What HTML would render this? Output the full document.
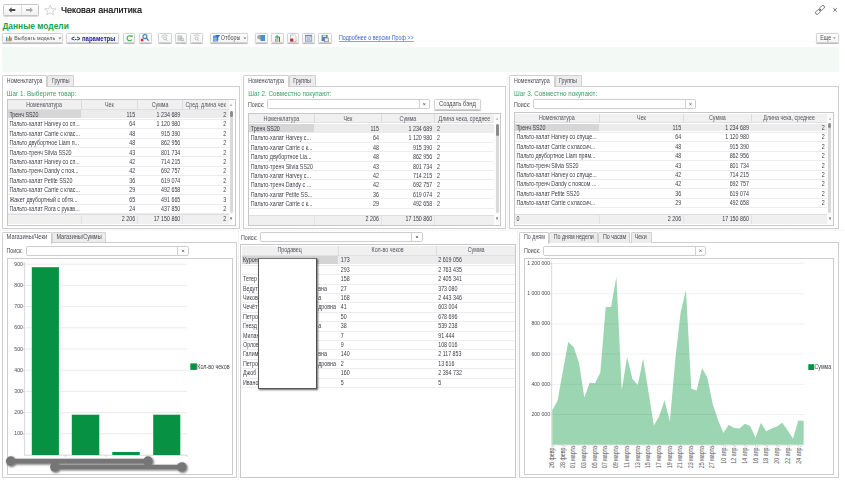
<!DOCTYPE html>
<html><head><meta charset="utf-8"><style>
html,body{margin:0;padding:0;background:#fff;width:845px;height:480px;overflow:hidden;position:relative}
body{font-family:"Liberation Sans",sans-serif}
div{position:absolute;box-sizing:border-box}
.t{white-space:nowrap}
svg{position:absolute;overflow:visible}
</style></head><body>
<div style="left:2.70px;top:4.30px;width:36.20px;height:11.30px;border:1px solid #c6c6c6;border-radius:1.5px;background:linear-gradient(#ffffff,#f1f1f1);box-shadow:0 0.6px 0.6px #b5b5b5"></div>
<div style="left:20.70px;top:4.80px;width:0.70px;height:10.30px;background:#dedede"></div>
<svg style="left:0;top:0" width="845" height="480" viewBox="0 0 845 480"><path d="M8.6 9.95 L11.6 7.2 L11.6 8.9 L15.3 8.9 L15.3 11 L11.6 11 L11.6 12.7 Z" fill="#4a4a4a"/><path d="M33 9.95 L30 7.2 L30 8.9 L26 8.9 L26 11 L30 11 L30 12.7 Z" fill="#a8a8a8"/><path d="M50.25 5.2 L51.7 8.6 L55.9 8.9 L52.7 11.3 L53.8 14.9 L50.25 12.9 L46.7 14.9 L47.8 11.3 L44.6 8.9 L48.8 8.6 Z" fill="none" stroke="#c3cad2" stroke-width="0.8"/><g fill="none" stroke="#606060" stroke-width="0.8" transform="rotate(-45 820 9.9)"><rect x="814.3" y="8.3" width="5.6" height="3.2" rx="1.6"/><rect x="820.1" y="8.3" width="5.6" height="3.2" rx="1.6"/><path d="M818.6 9.9 L821.4 9.9"/></g><path d="M833.3 8.1 L836.8 11.5 M836.8 8.1 L833.3 11.5" stroke="#555" stroke-width="0.85"/></svg>
<div class="t" style="left:60.90px;top:6.14px;font-size:9.05px;line-height:9.05px;color:#000;font-weight:400;-webkit-text-stroke:0.2px #111;transform-origin:0 7.66px;transform:scaleY(1.06)">Чековая аналитика</div>
<div class="t" style="left:2.40px;top:22.09px;font-size:8.4px;line-height:8.4px;color:#19a052;font-weight:700;">Данные модели</div>
<div style="left:2.10px;top:33.30px;width:61.30px;height:9.90px;border:1px solid #d3d3d3;border-radius:1.5px;background:linear-gradient(#ffffff,#f4f4f4);box-shadow:0 0.7px 0.8px #b8b8b8"></div>
<div class="t" style="left:14.20px;top:35.91px;font-size:5.3px;line-height:5.3px;color:#505050;font-weight:400;transform-origin:0 4.49px;transform:scaleY(1.18);">Выбрать модель</div>
<svg style="left:0;top:0" width="845" height="480"><rect x="5.6" y="40.6" width="6" height="0.6" fill="#777"/><rect x="6" y="37" width="1.2" height="3.6" fill="#3a9ad9"/><rect x="7.5" y="38" width="1.2" height="2.6" fill="#e0a020"/><rect x="9" y="36" width="1.2" height="4.6" fill="#4caf50"/><rect x="10.4" y="37.5" width="1.2" height="3.1" fill="#d9402b"/><path d="M58.6 37.6 L61.2 37.6 L59.9 39.2 Z" fill="#666"/></svg>
<div style="left:66.30px;top:33.30px;width:53.20px;height:9.90px;border:1px solid #d3d3d3;border-radius:1.5px;background:linear-gradient(#ffffff,#f4f4f4);box-shadow:0 0.7px 0.8px #b8b8b8"></div>
<div class="t" style="left:71.30px;top:35.62px;font-size:6.0px;line-height:6.0px;color:#1c1c90;font-weight:700;transform-origin:0 5.08px;transform:scaleY(1.08)">&lt;-&gt; параметры</div>
<div style="left:122.80px;top:33.30px;width:12.60px;height:9.90px;border:1px solid #d3d3d3;border-radius:1.5px;background:linear-gradient(#ffffff,#f4f4f4);box-shadow:0 0.7px 0.8px #b8b8b8"></div>
<div style="left:138.50px;top:33.30px;width:13.00px;height:9.90px;border:1px solid #d3d3d3;border-radius:1.5px;background:linear-gradient(#ffffff,#f4f4f4);box-shadow:0 0.7px 0.8px #b8b8b8"></div>
<div style="left:158.00px;top:33.30px;width:13.50px;height:9.90px;border:1px solid #d3d3d3;border-radius:1.5px;background:linear-gradient(#ffffff,#f4f4f4);box-shadow:0 0.7px 0.8px #b8b8b8"></div>
<div style="left:174.60px;top:33.30px;width:12.40px;height:9.90px;border:1px solid #d3d3d3;border-radius:1.5px;background:linear-gradient(#ffffff,#f4f4f4);box-shadow:0 0.7px 0.8px #b8b8b8"></div>
<div style="left:190.00px;top:33.30px;width:13.00px;height:9.90px;border:1px solid #d3d3d3;border-radius:1.5px;background:linear-gradient(#ffffff,#f4f4f4);box-shadow:0 0.7px 0.8px #b8b8b8"></div>
<div style="left:210.00px;top:33.30px;width:37.70px;height:9.90px;border:1px solid #d3d3d3;border-radius:1.5px;background:linear-gradient(#ffffff,#f4f4f4);box-shadow:0 0.7px 0.8px #b8b8b8"></div>
<div class="t" style="left:220.80px;top:35.83px;font-size:5.4px;line-height:5.4px;color:#505050;font-weight:400;transform-origin:0 4.57px;transform:scaleY(1.18);">Отборы</div>
<div style="left:255.00px;top:33.30px;width:12.70px;height:9.90px;border:1px solid #d3d3d3;border-radius:1.5px;background:linear-gradient(#ffffff,#f4f4f4);box-shadow:0 0.7px 0.8px #b8b8b8"></div>
<div style="left:271.00px;top:33.30px;width:12.70px;height:9.90px;border:1px solid #d3d3d3;border-radius:1.5px;background:linear-gradient(#ffffff,#f4f4f4);box-shadow:0 0.7px 0.8px #b8b8b8"></div>
<div style="left:286.50px;top:33.30px;width:12.80px;height:9.90px;border:1px solid #d3d3d3;border-radius:1.5px;background:linear-gradient(#ffffff,#f4f4f4);box-shadow:0 0.7px 0.8px #b8b8b8"></div>
<div style="left:302.00px;top:33.30px;width:13.00px;height:9.90px;border:1px solid #d3d3d3;border-radius:1.5px;background:linear-gradient(#ffffff,#f4f4f4);box-shadow:0 0.7px 0.8px #b8b8b8"></div>
<div style="left:318.00px;top:33.30px;width:13.70px;height:9.90px;border:1px solid #d3d3d3;border-radius:1.5px;background:linear-gradient(#ffffff,#f4f4f4);box-shadow:0 0.7px 0.8px #b8b8b8"></div>
<div class="t" style="left:339.00px;top:35.65px;font-size:5.37px;line-height:5.37px;color:#3f66d0;font-weight:400;transform-origin:0 4.55px;transform:scaleY(1.18);">Подробнее о версии Проф &gt;&gt;</div>
<div style="left:339.20px;top:40.70px;width:74.60px;height:0.60px;background:#8aa3e6"></div>
<div style="left:815.50px;top:32.60px;width:23.00px;height:10.30px;border:1px solid #d3d3d3;border-radius:1.5px;background:linear-gradient(#ffffff,#f4f4f4);box-shadow:0 0.7px 0.8px #b8b8b8"></div>
<div class="t" style="left:820.20px;top:35.84px;font-size:5.5px;line-height:5.5px;color:#505050;font-weight:400;transform-origin:0 4.66px;transform:scaleY(1.18);">Еще</div>
<div style="left:2.00px;top:46.50px;width:836.75px;height:25.50px;background:#f3faf5"></div>
<svg style="left:0;top:0" width="845" height="480"><g stroke="#dedede" stroke-width="0.7" stroke-dasharray="1.2 1.3"><line x1="241.8" y1="74" x2="241.8" y2="229"/><line x1="507.5" y1="74" x2="507.5" y2="229"/><line x1="0" y1="230.3" x2="845" y2="230.3"/><line x1="238.5" y1="231" x2="238.5" y2="480"/><line x1="517.6" y1="231" x2="517.6" y2="480"/></g></svg>
<div style="left:1.80px;top:85.50px;width:238.20px;height:143.40px;border:1px solid #cfcfcf;background:#fff"></div>
<div style="left:1.80px;top:74.70px;width:45.30px;height:12.50px;border:1px solid #cfcfcf;border-bottom:none;background:#fff;border-radius:1.5px 1.5px 0 0"></div>
<div style="left:47.40px;top:74.70px;width:27.00px;height:11.30px;border:1px solid #d2d2d2;border-bottom:none;background:#ececec;border-radius:1.5px 1.5px 0 0"></div>
<div style="left:243.40px;top:85.50px;width:262.70px;height:143.40px;border:1px solid #cfcfcf;background:#fff"></div>
<div style="left:243.40px;top:74.70px;width:45.30px;height:12.50px;border:1px solid #cfcfcf;border-bottom:none;background:#fff;border-radius:1.5px 1.5px 0 0"></div>
<div style="left:289.00px;top:74.70px;width:27.00px;height:11.30px;border:1px solid #d2d2d2;border-bottom:none;background:#ececec;border-radius:1.5px 1.5px 0 0"></div>
<div style="left:509.25px;top:85.50px;width:330.00px;height:143.40px;border:1px solid #cfcfcf;background:#fff"></div>
<div style="left:509.25px;top:74.70px;width:45.30px;height:12.50px;border:1px solid #cfcfcf;border-bottom:none;background:#fff;border-radius:1.5px 1.5px 0 0"></div>
<div style="left:554.85px;top:74.70px;width:27.00px;height:11.30px;border:1px solid #d2d2d2;border-bottom:none;background:#ececec;border-radius:1.5px 1.5px 0 0"></div>
<div style="left:1.80px;top:242.00px;width:235.20px;height:235.90px;border:1px solid #cfcfcf;background:#fff"></div>
<div style="left:1.80px;top:231.80px;width:50.00px;height:11.90px;border:1px solid #cfcfcf;border-bottom:none;background:#fff;border-radius:1.5px 1.5px 0 0"></div>
<div style="left:52.10px;top:231.80px;width:54.20px;height:10.70px;border:1px solid #d2d2d2;border-bottom:none;background:#ececec;border-radius:1.5px 1.5px 0 0"></div>
<div style="left:519.20px;top:242.00px;width:319.80px;height:235.75px;border:1px solid #cfcfcf;background:#fff"></div>
<div style="left:519.20px;top:231.50px;width:29.50px;height:12.20px;border:1px solid #cfcfcf;border-bottom:none;background:#fff;border-radius:1.5px 1.5px 0 0"></div>
<div style="left:549.00px;top:231.50px;width:49.00px;height:11.00px;border:1px solid #d2d2d2;border-bottom:none;background:#ececec;border-radius:1.5px 1.5px 0 0"></div>
<div style="left:598.30px;top:231.50px;width:32.00px;height:11.00px;border:1px solid #d2d2d2;border-bottom:none;background:#ececec;border-radius:1.5px 1.5px 0 0"></div>
<div style="left:630.60px;top:231.50px;width:21.50px;height:11.00px;border:1px solid #d2d2d2;border-bottom:none;background:#ececec;border-radius:1.5px 1.5px 0 0"></div>
<div class="t" style="left:6.80px;top:78.79px;font-size:5.33px;line-height:5.33px;color:#4a4a55;font-weight:400;transform-origin:0 4.51px;transform:scaleY(1.18);">Номенклатура</div>
<div class="t" style="left:51.80px;top:78.79px;font-size:5.33px;line-height:5.33px;color:#4a4a55;font-weight:400;transform-origin:0 4.51px;transform:scaleY(1.18);">Группы</div>
<div class="t" style="left:248.20px;top:78.79px;font-size:5.33px;line-height:5.33px;color:#4a4a55;font-weight:400;transform-origin:0 4.51px;transform:scaleY(1.18);">Номенклатура</div>
<div class="t" style="left:293.20px;top:78.79px;font-size:5.33px;line-height:5.33px;color:#4a4a55;font-weight:400;transform-origin:0 4.51px;transform:scaleY(1.18);">Группы</div>
<div class="t" style="left:514.00px;top:78.79px;font-size:5.33px;line-height:5.33px;color:#4a4a55;font-weight:400;transform-origin:0 4.51px;transform:scaleY(1.18);">Номенклатура</div>
<div class="t" style="left:559.00px;top:78.79px;font-size:5.33px;line-height:5.33px;color:#4a4a55;font-weight:400;transform-origin:0 4.51px;transform:scaleY(1.18);">Группы</div>
<div class="t" style="left:6.60px;top:234.93px;font-size:5.75px;line-height:5.75px;color:#4a4a55;font-weight:400;transform-origin:0 4.87px;transform:scaleY(1.18);">Магазины/Чеки</div>
<div class="t" style="left:56.40px;top:235.10px;font-size:5.55px;line-height:5.55px;color:#4a4a55;font-weight:400;transform-origin:0 4.70px;transform:scaleY(1.18);">Магазины/Суммы</div>
<div class="t" style="left:524.00px;top:235.29px;font-size:5.33px;line-height:5.33px;color:#4a4a55;font-weight:400;transform-origin:0 4.51px;transform:scaleY(1.18);">По дням</div>
<div class="t" style="left:553.70px;top:235.29px;font-size:5.33px;line-height:5.33px;color:#4a4a55;font-weight:400;transform-origin:0 4.51px;transform:scaleY(1.18);">По дням недели</div>
<div class="t" style="left:602.90px;top:235.29px;font-size:5.33px;line-height:5.33px;color:#4a4a55;font-weight:400;transform-origin:0 4.51px;transform:scaleY(1.18);">По часам</div>
<div class="t" style="left:634.80px;top:235.29px;font-size:5.33px;line-height:5.33px;color:#4a4a55;font-weight:400;transform-origin:0 4.51px;transform:scaleY(1.18);">Чеки</div>
<div class="t" style="left:6.80px;top:90.67px;font-size:6.3px;line-height:6.3px;color:#34a465;font-weight:400;transform-origin:0 5.33px;transform:scaleY(1.18);">Шаг 1. Выберите товар:</div>
<div class="t" style="left:248.20px;top:90.77px;font-size:6.3px;line-height:6.3px;color:#34a465;font-weight:400;transform-origin:0 5.33px;transform:scaleY(1.18);">Шаг 2. Совместно покупают:</div>
<div class="t" style="left:514.00px;top:90.77px;font-size:6.3px;line-height:6.3px;color:#34a465;font-weight:400;transform-origin:0 5.33px;transform:scaleY(1.18);">Шаг 3. Совместно покупают:</div>
<div class="t" style="left:248.00px;top:103.09px;font-size:5.33px;line-height:5.33px;color:#4a4a55;font-weight:400;transform-origin:0 4.51px;transform:scaleY(1.18);">Поиск:</div>
<div style="left:266.70px;top:98.90px;width:163.10px;height:10.20px;border:1px solid #cdcdcd;border-radius:1.8px;background:#fff"></div>
<div style="left:418.90px;top:99.40px;width:0.80px;height:9.20px;background:#d0d0d0"></div>
<svg style="left:0;top:0" width="845" height="480"><path d="M423.20 103.10 L425.40 105.30 M425.40 103.10 L423.20 105.30" stroke="#5a5a5a" stroke-width="0.75"/></svg>
<div class="t" style="left:514.00px;top:103.09px;font-size:5.33px;line-height:5.33px;color:#4a4a55;font-weight:400;transform-origin:0 4.51px;transform:scaleY(1.18);">Поиск:</div>
<div style="left:532.50px;top:98.90px;width:163.50px;height:10.00px;border:1px solid #cdcdcd;border-radius:1.8px;background:#fff"></div>
<div style="left:685.20px;top:99.40px;width:0.80px;height:9.00px;background:#d0d0d0"></div>
<svg style="left:0;top:0" width="845" height="480"><path d="M689.45 103.00 L691.65 105.20 M691.65 103.00 L689.45 105.20" stroke="#5a5a5a" stroke-width="0.75"/></svg>
<div class="t" style="left:6.50px;top:248.89px;font-size:5.33px;line-height:5.33px;color:#4a4a55;font-weight:400;transform-origin:0 4.51px;transform:scaleY(1.18);">Поиск:</div>
<div style="left:25.50px;top:245.50px;width:163.40px;height:10.30px;border:1px solid #cdcdcd;border-radius:1.8px;background:#fff"></div>
<div style="left:177.40px;top:246.00px;width:0.80px;height:9.30px;background:#d0d0d0"></div>
<svg style="left:0;top:0" width="845" height="480"><path d="M182.00 249.75 L184.20 251.95 M184.20 249.75 L182.00 251.95" stroke="#5a5a5a" stroke-width="0.75"/></svg>
<div class="t" style="left:241.00px;top:235.59px;font-size:5.33px;line-height:5.33px;color:#4a4a55;font-weight:400;transform-origin:0 4.51px;transform:scaleY(1.18);">Поиск:</div>
<div style="left:259.90px;top:231.90px;width:162.90px;height:9.70px;border:1px solid #cdcdcd;border-radius:1.8px;background:#fff"></div>
<div style="left:411.30px;top:232.40px;width:0.80px;height:8.70px;background:#d0d0d0"></div>
<svg style="left:0;top:0" width="845" height="480"><path d="M415.90 235.85 L418.10 238.05 M418.10 235.85 L415.90 238.05" stroke="#5a5a5a" stroke-width="0.75"/></svg>
<div class="t" style="left:524.00px;top:248.89px;font-size:5.33px;line-height:5.33px;color:#4a4a55;font-weight:400;transform-origin:0 4.51px;transform:scaleY(1.18);">Поиск:</div>
<div style="left:543.10px;top:245.50px;width:162.80px;height:10.00px;border:1px solid #cdcdcd;border-radius:1.8px;background:#fff"></div>
<div style="left:695.20px;top:246.00px;width:0.80px;height:9.00px;background:#d0d0d0"></div>
<svg style="left:0;top:0" width="845" height="480"><path d="M699.40 249.60 L701.60 251.80 M701.60 249.60 L699.40 251.80" stroke="#5a5a5a" stroke-width="0.75"/></svg>
<div style="left:434.00px;top:99.40px;width:46.60px;height:10.20px;border:1px solid #d3d3d3;border-radius:1.5px;background:linear-gradient(#ffffff,#f4f4f4);box-shadow:0 0.7px 0.8px #b8b8b8"></div>
<div class="t" style="left:257.50px;width:400px;text-align:center;top:102.01px;font-size:5.9px;line-height:5.9px;color:#505050;font-weight:400;transform-origin:0 4.99px;transform:scaleY(1.18);">Создать бэнд</div>
<div style="left:6.50px;top:98.50px;width:229.00px;height:127.30px;border:1px solid #c8c8c8;background:#fff"></div>
<div style="left:8.00px;top:100.00px;width:220.50px;height:9.80px;background:#f0f0f0;border-bottom:1px solid #e0e0e0"></div>
<div style="left:80.80px;top:100.00px;width:0.80px;height:9.80px;background:#dcdcdc"></div>
<div style="left:137.00px;top:100.00px;width:0.80px;height:9.80px;background:#dcdcdc"></div>
<div style="left:182.20px;top:100.00px;width:0.80px;height:9.80px;background:#dcdcdc"></div>
<div class="t" style="left:-155.85px;width:400px;text-align:center;top:102.59px;font-size:5.33px;line-height:5.33px;color:#555560;font-weight:400;transform-origin:0 4.51px;transform:scaleY(1.18);">Номенклатура</div>
<div class="t" style="left:-90.60px;width:400px;text-align:center;top:102.59px;font-size:5.33px;line-height:5.33px;color:#555560;font-weight:400;transform-origin:0 4.51px;transform:scaleY(1.18);">Чек</div>
<div class="t" style="left:-39.90px;width:400px;text-align:center;top:102.59px;font-size:5.33px;line-height:5.33px;color:#555560;font-weight:400;transform-origin:0 4.51px;transform:scaleY(1.18);">Сумма</div>
<div class="t" style="left:5.60px;width:400px;text-align:center;top:102.59px;font-size:5.33px;line-height:5.33px;color:#555560;font-weight:400;transform-origin:0 4.51px;transform:scaleY(1.18);">Сред. длина чек</div>
<div style="left:8.00px;top:110.30px;width:220.50px;height:7.73px;background:#ececec"></div>
<div style="left:8.00px;top:110.30px;width:72.80px;height:7.73px;background:#d6d6d6"></div>
<div style="left:8.00px;top:118.73px;width:220.50px;height:0.80px;background:#ececec"></div>
<div class="t" style="left:9.40px;top:112.79px;font-size:5.33px;line-height:5.33px;color:#3c3c46;font-weight:400;transform-origin:0 4.51px;transform:scaleY(1.18);">Тренч SS20</div>
<div class="t" style="right:709.90px;top:112.79px;font-size:5.33px;line-height:5.33px;color:#3c3c46;font-weight:400;transform-origin:0 4.51px;transform:scaleY(1.18);">115</div>
<div class="t" style="right:664.70px;top:112.79px;font-size:5.33px;line-height:5.33px;color:#3c3c46;font-weight:400;transform-origin:0 4.51px;transform:scaleY(1.18);">1 234 689</div>
<div class="t" style="right:618.90px;top:112.79px;font-size:5.33px;line-height:5.33px;color:#3c3c46;font-weight:400;transform-origin:0 4.51px;transform:scaleY(1.18);">2</div>
<div style="left:8.00px;top:128.16px;width:220.50px;height:0.80px;background:#ececec"></div>
<div class="t" style="left:9.40px;top:122.22px;font-size:5.33px;line-height:5.33px;color:#3c3c46;font-weight:400;transform-origin:0 4.51px;transform:scaleY(1.18);">Пальто-халат Harvey со сп...</div>
<div class="t" style="right:709.90px;top:122.22px;font-size:5.33px;line-height:5.33px;color:#3c3c46;font-weight:400;transform-origin:0 4.51px;transform:scaleY(1.18);">64</div>
<div class="t" style="right:664.70px;top:122.22px;font-size:5.33px;line-height:5.33px;color:#3c3c46;font-weight:400;transform-origin:0 4.51px;transform:scaleY(1.18);">1 120 980</div>
<div class="t" style="right:618.90px;top:122.22px;font-size:5.33px;line-height:5.33px;color:#3c3c46;font-weight:400;transform-origin:0 4.51px;transform:scaleY(1.18);">2</div>
<div style="left:8.00px;top:137.59px;width:220.50px;height:0.80px;background:#ececec"></div>
<div class="t" style="left:9.40px;top:131.65px;font-size:5.33px;line-height:5.33px;color:#3c3c46;font-weight:400;transform-origin:0 4.51px;transform:scaleY(1.18);">Пальто-халат Carrie с клас...</div>
<div class="t" style="right:709.90px;top:131.65px;font-size:5.33px;line-height:5.33px;color:#3c3c46;font-weight:400;transform-origin:0 4.51px;transform:scaleY(1.18);">48</div>
<div class="t" style="right:664.70px;top:131.65px;font-size:5.33px;line-height:5.33px;color:#3c3c46;font-weight:400;transform-origin:0 4.51px;transform:scaleY(1.18);">915 390</div>
<div class="t" style="right:618.90px;top:131.65px;font-size:5.33px;line-height:5.33px;color:#3c3c46;font-weight:400;transform-origin:0 4.51px;transform:scaleY(1.18);">2</div>
<div style="left:8.00px;top:147.02px;width:220.50px;height:0.80px;background:#ececec"></div>
<div class="t" style="left:9.40px;top:141.08px;font-size:5.33px;line-height:5.33px;color:#3c3c46;font-weight:400;transform-origin:0 4.51px;transform:scaleY(1.18);">Пальто двубортное Liam п...</div>
<div class="t" style="right:709.90px;top:141.08px;font-size:5.33px;line-height:5.33px;color:#3c3c46;font-weight:400;transform-origin:0 4.51px;transform:scaleY(1.18);">48</div>
<div class="t" style="right:664.70px;top:141.08px;font-size:5.33px;line-height:5.33px;color:#3c3c46;font-weight:400;transform-origin:0 4.51px;transform:scaleY(1.18);">862 956</div>
<div class="t" style="right:618.90px;top:141.08px;font-size:5.33px;line-height:5.33px;color:#3c3c46;font-weight:400;transform-origin:0 4.51px;transform:scaleY(1.18);">2</div>
<div style="left:8.00px;top:156.45px;width:220.50px;height:0.80px;background:#ececec"></div>
<div class="t" style="left:9.40px;top:150.51px;font-size:5.33px;line-height:5.33px;color:#3c3c46;font-weight:400;transform-origin:0 4.51px;transform:scaleY(1.18);">Пальто-тренч Silvia SS20</div>
<div class="t" style="right:709.90px;top:150.51px;font-size:5.33px;line-height:5.33px;color:#3c3c46;font-weight:400;transform-origin:0 4.51px;transform:scaleY(1.18);">43</div>
<div class="t" style="right:664.70px;top:150.51px;font-size:5.33px;line-height:5.33px;color:#3c3c46;font-weight:400;transform-origin:0 4.51px;transform:scaleY(1.18);">801 734</div>
<div class="t" style="right:618.90px;top:150.51px;font-size:5.33px;line-height:5.33px;color:#3c3c46;font-weight:400;transform-origin:0 4.51px;transform:scaleY(1.18);">2</div>
<div style="left:8.00px;top:165.88px;width:220.50px;height:0.80px;background:#ececec"></div>
<div class="t" style="left:9.40px;top:159.94px;font-size:5.33px;line-height:5.33px;color:#3c3c46;font-weight:400;transform-origin:0 4.51px;transform:scaleY(1.18);">Пальто-халат Harvey со сп...</div>
<div class="t" style="right:709.90px;top:159.94px;font-size:5.33px;line-height:5.33px;color:#3c3c46;font-weight:400;transform-origin:0 4.51px;transform:scaleY(1.18);">42</div>
<div class="t" style="right:664.70px;top:159.94px;font-size:5.33px;line-height:5.33px;color:#3c3c46;font-weight:400;transform-origin:0 4.51px;transform:scaleY(1.18);">714 215</div>
<div class="t" style="right:618.90px;top:159.94px;font-size:5.33px;line-height:5.33px;color:#3c3c46;font-weight:400;transform-origin:0 4.51px;transform:scaleY(1.18);">2</div>
<div style="left:8.00px;top:175.31px;width:220.50px;height:0.80px;background:#ececec"></div>
<div class="t" style="left:9.40px;top:169.37px;font-size:5.33px;line-height:5.33px;color:#3c3c46;font-weight:400;transform-origin:0 4.51px;transform:scaleY(1.18);">Пальто-тренч Dandy с поя...</div>
<div class="t" style="right:709.90px;top:169.37px;font-size:5.33px;line-height:5.33px;color:#3c3c46;font-weight:400;transform-origin:0 4.51px;transform:scaleY(1.18);">42</div>
<div class="t" style="right:664.70px;top:169.37px;font-size:5.33px;line-height:5.33px;color:#3c3c46;font-weight:400;transform-origin:0 4.51px;transform:scaleY(1.18);">692 757</div>
<div class="t" style="right:618.90px;top:169.37px;font-size:5.33px;line-height:5.33px;color:#3c3c46;font-weight:400;transform-origin:0 4.51px;transform:scaleY(1.18);">2</div>
<div style="left:8.00px;top:184.74px;width:220.50px;height:0.80px;background:#ececec"></div>
<div class="t" style="left:9.40px;top:178.80px;font-size:5.33px;line-height:5.33px;color:#3c3c46;font-weight:400;transform-origin:0 4.51px;transform:scaleY(1.18);">Пальто-халат Petite SS20</div>
<div class="t" style="right:709.90px;top:178.80px;font-size:5.33px;line-height:5.33px;color:#3c3c46;font-weight:400;transform-origin:0 4.51px;transform:scaleY(1.18);">36</div>
<div class="t" style="right:664.70px;top:178.80px;font-size:5.33px;line-height:5.33px;color:#3c3c46;font-weight:400;transform-origin:0 4.51px;transform:scaleY(1.18);">619 074</div>
<div class="t" style="right:618.90px;top:178.80px;font-size:5.33px;line-height:5.33px;color:#3c3c46;font-weight:400;transform-origin:0 4.51px;transform:scaleY(1.18);">2</div>
<div style="left:8.00px;top:194.17px;width:220.50px;height:0.80px;background:#ececec"></div>
<div class="t" style="left:9.40px;top:188.23px;font-size:5.33px;line-height:5.33px;color:#3c3c46;font-weight:400;transform-origin:0 4.51px;transform:scaleY(1.18);">Пальто-халат Carrie с клас...</div>
<div class="t" style="right:709.90px;top:188.23px;font-size:5.33px;line-height:5.33px;color:#3c3c46;font-weight:400;transform-origin:0 4.51px;transform:scaleY(1.18);">29</div>
<div class="t" style="right:664.70px;top:188.23px;font-size:5.33px;line-height:5.33px;color:#3c3c46;font-weight:400;transform-origin:0 4.51px;transform:scaleY(1.18);">492 658</div>
<div class="t" style="right:618.90px;top:188.23px;font-size:5.33px;line-height:5.33px;color:#3c3c46;font-weight:400;transform-origin:0 4.51px;transform:scaleY(1.18);">2</div>
<div style="left:8.00px;top:203.60px;width:220.50px;height:0.80px;background:#ececec"></div>
<div class="t" style="left:9.40px;top:197.66px;font-size:5.33px;line-height:5.33px;color:#3c3c46;font-weight:400;transform-origin:0 4.51px;transform:scaleY(1.18);">Жакет двубортный с обтя...</div>
<div class="t" style="right:709.90px;top:197.66px;font-size:5.33px;line-height:5.33px;color:#3c3c46;font-weight:400;transform-origin:0 4.51px;transform:scaleY(1.18);">65</div>
<div class="t" style="right:664.70px;top:197.66px;font-size:5.33px;line-height:5.33px;color:#3c3c46;font-weight:400;transform-origin:0 4.51px;transform:scaleY(1.18);">491 665</div>
<div class="t" style="right:618.90px;top:197.66px;font-size:5.33px;line-height:5.33px;color:#3c3c46;font-weight:400;transform-origin:0 4.51px;transform:scaleY(1.18);">3</div>
<div style="left:8.00px;top:213.03px;width:220.50px;height:0.80px;background:#ececec"></div>
<div class="t" style="left:9.40px;top:207.09px;font-size:5.33px;line-height:5.33px;color:#3c3c46;font-weight:400;transform-origin:0 4.51px;transform:scaleY(1.18);">Пальто-халат Rora с рукав...</div>
<div class="t" style="right:709.90px;top:207.09px;font-size:5.33px;line-height:5.33px;color:#3c3c46;font-weight:400;transform-origin:0 4.51px;transform:scaleY(1.18);">24</div>
<div class="t" style="right:664.70px;top:207.09px;font-size:5.33px;line-height:5.33px;color:#3c3c46;font-weight:400;transform-origin:0 4.51px;transform:scaleY(1.18);">437 850</div>
<div class="t" style="right:618.90px;top:207.09px;font-size:5.33px;line-height:5.33px;color:#3c3c46;font-weight:400;transform-origin:0 4.51px;transform:scaleY(1.18);">2</div>
<div style="left:8.00px;top:213.60px;width:220.50px;height:10.70px;background:#f0f0f0;border-top:1px solid #dedede"></div>
<div style="left:80.80px;top:213.60px;width:0.80px;height:10.70px;background:#e2e2e2"></div>
<div style="left:137.00px;top:213.60px;width:0.80px;height:10.70px;background:#e2e2e2"></div>
<div style="left:182.20px;top:213.60px;width:0.80px;height:10.70px;background:#e2e2e2"></div>
<div class="t" style="right:709.90px;top:216.59px;font-size:5.33px;line-height:5.33px;color:#3c3c46;font-weight:400;transform-origin:0 4.51px;transform:scaleY(1.18);">2 206</div>
<div class="t" style="right:664.70px;top:216.59px;font-size:5.33px;line-height:5.33px;color:#3c3c46;font-weight:400;transform-origin:0 4.51px;transform:scaleY(1.18);">17 150 860</div>
<div class="t" style="right:618.90px;top:216.59px;font-size:5.33px;line-height:5.33px;color:#3c3c46;font-weight:400;transform-origin:0 4.51px;transform:scaleY(1.18);">2</div>
<div style="left:228.50px;top:100.00px;width:5.50px;height:124.30px;background:#fbfbfb"></div>
<div class="t" style="left:31.75px;width:400px;text-align:center;top:103.19px;font-size:4.5px;line-height:4.5px;color:#b5b5b5;font-weight:400;transform-origin:0 3.81px;transform:scaleY(1.18);">▴</div>
<div class="t" style="left:31.75px;width:400px;text-align:center;top:216.89px;font-size:4.5px;line-height:4.5px;color:#555;font-weight:400;transform-origin:0 3.81px;transform:scaleY(1.18);">▾</div>
<div style="left:229.70px;top:110.60px;width:2.90px;height:102.40px;background:#d9d9d9;border-radius:2px"></div>
<div style="left:229.70px;top:110.60px;width:2.90px;height:6.80px;background:#8c8c8c;border-radius:2px"></div>
<div style="left:247.80px;top:112.70px;width:253.70px;height:113.30px;border:1px solid #c8c8c8;background:#fff"></div>
<div style="left:249.30px;top:114.20px;width:245.00px;height:9.20px;background:#f0f0f0;border-bottom:1px solid #e0e0e0"></div>
<div style="left:314.10px;top:114.20px;width:0.80px;height:9.20px;background:#dcdcdc"></div>
<div style="left:380.80px;top:114.20px;width:0.80px;height:9.20px;background:#dcdcdc"></div>
<div style="left:434.10px;top:114.20px;width:0.80px;height:9.20px;background:#dcdcdc"></div>
<div class="t" style="left:81.45px;width:400px;text-align:center;top:116.79px;font-size:5.33px;line-height:5.33px;color:#555560;font-weight:400;transform-origin:0 4.51px;transform:scaleY(1.18);">Номенклатура</div>
<div class="t" style="left:147.95px;width:400px;text-align:center;top:116.79px;font-size:5.33px;line-height:5.33px;color:#555560;font-weight:400;transform-origin:0 4.51px;transform:scaleY(1.18);">Чек</div>
<div class="t" style="left:207.95px;width:400px;text-align:center;top:116.79px;font-size:5.33px;line-height:5.33px;color:#555560;font-weight:400;transform-origin:0 4.51px;transform:scaleY(1.18);">Сумма</div>
<div class="t" style="left:264.45px;width:400px;text-align:center;top:116.79px;font-size:5.33px;line-height:5.33px;color:#555560;font-weight:400;transform-origin:0 4.51px;transform:scaleY(1.18);">Длина чека, среднее</div>
<div style="left:249.30px;top:123.90px;width:245.00px;height:7.72px;background:#ececec"></div>
<div style="left:249.30px;top:123.90px;width:64.80px;height:7.72px;background:#d6d6d6"></div>
<div style="left:249.30px;top:132.32px;width:245.00px;height:0.80px;background:#ececec"></div>
<div class="t" style="left:250.70px;top:126.89px;font-size:5.33px;line-height:5.33px;color:#3c3c46;font-weight:400;transform-origin:0 4.51px;transform:scaleY(1.18);">Тренч SS20</div>
<div class="t" style="right:466.10px;top:126.89px;font-size:5.33px;line-height:5.33px;color:#3c3c46;font-weight:400;transform-origin:0 4.51px;transform:scaleY(1.18);">115</div>
<div class="t" style="right:412.80px;top:126.89px;font-size:5.33px;line-height:5.33px;color:#3c3c46;font-weight:400;transform-origin:0 4.51px;transform:scaleY(1.18);">1 234 689</div>
<div class="t" style="left:437.00px;top:126.89px;font-size:5.33px;line-height:5.33px;color:#3c3c46;font-weight:400;transform-origin:0 4.51px;transform:scaleY(1.18);">2</div>
<div style="left:249.30px;top:141.74px;width:245.00px;height:0.80px;background:#ececec"></div>
<div class="t" style="left:250.70px;top:136.31px;font-size:5.33px;line-height:5.33px;color:#3c3c46;font-weight:400;transform-origin:0 4.51px;transform:scaleY(1.18);">Пальто-халат Harvey с...</div>
<div class="t" style="right:466.10px;top:136.31px;font-size:5.33px;line-height:5.33px;color:#3c3c46;font-weight:400;transform-origin:0 4.51px;transform:scaleY(1.18);">64</div>
<div class="t" style="right:412.80px;top:136.31px;font-size:5.33px;line-height:5.33px;color:#3c3c46;font-weight:400;transform-origin:0 4.51px;transform:scaleY(1.18);">1 120 980</div>
<div class="t" style="left:437.00px;top:136.31px;font-size:5.33px;line-height:5.33px;color:#3c3c46;font-weight:400;transform-origin:0 4.51px;transform:scaleY(1.18);">2</div>
<div style="left:249.30px;top:151.16px;width:245.00px;height:0.80px;background:#ececec"></div>
<div class="t" style="left:250.70px;top:145.73px;font-size:5.33px;line-height:5.33px;color:#3c3c46;font-weight:400;transform-origin:0 4.51px;transform:scaleY(1.18);">Пальто-халат Carrie с к...</div>
<div class="t" style="right:466.10px;top:145.73px;font-size:5.33px;line-height:5.33px;color:#3c3c46;font-weight:400;transform-origin:0 4.51px;transform:scaleY(1.18);">48</div>
<div class="t" style="right:412.80px;top:145.73px;font-size:5.33px;line-height:5.33px;color:#3c3c46;font-weight:400;transform-origin:0 4.51px;transform:scaleY(1.18);">915 390</div>
<div class="t" style="left:437.00px;top:145.73px;font-size:5.33px;line-height:5.33px;color:#3c3c46;font-weight:400;transform-origin:0 4.51px;transform:scaleY(1.18);">2</div>
<div style="left:249.30px;top:160.58px;width:245.00px;height:0.80px;background:#ececec"></div>
<div class="t" style="left:250.70px;top:155.15px;font-size:5.33px;line-height:5.33px;color:#3c3c46;font-weight:400;transform-origin:0 4.51px;transform:scaleY(1.18);">Пальто двубортное Lia...</div>
<div class="t" style="right:466.10px;top:155.15px;font-size:5.33px;line-height:5.33px;color:#3c3c46;font-weight:400;transform-origin:0 4.51px;transform:scaleY(1.18);">48</div>
<div class="t" style="right:412.80px;top:155.15px;font-size:5.33px;line-height:5.33px;color:#3c3c46;font-weight:400;transform-origin:0 4.51px;transform:scaleY(1.18);">862 956</div>
<div class="t" style="left:437.00px;top:155.15px;font-size:5.33px;line-height:5.33px;color:#3c3c46;font-weight:400;transform-origin:0 4.51px;transform:scaleY(1.18);">2</div>
<div style="left:249.30px;top:170.00px;width:245.00px;height:0.80px;background:#ececec"></div>
<div class="t" style="left:250.70px;top:164.57px;font-size:5.33px;line-height:5.33px;color:#3c3c46;font-weight:400;transform-origin:0 4.51px;transform:scaleY(1.18);">Пальто-тренч Silvia SS20</div>
<div class="t" style="right:466.10px;top:164.57px;font-size:5.33px;line-height:5.33px;color:#3c3c46;font-weight:400;transform-origin:0 4.51px;transform:scaleY(1.18);">43</div>
<div class="t" style="right:412.80px;top:164.57px;font-size:5.33px;line-height:5.33px;color:#3c3c46;font-weight:400;transform-origin:0 4.51px;transform:scaleY(1.18);">801 734</div>
<div class="t" style="left:437.00px;top:164.57px;font-size:5.33px;line-height:5.33px;color:#3c3c46;font-weight:400;transform-origin:0 4.51px;transform:scaleY(1.18);">2</div>
<div style="left:249.30px;top:179.42px;width:245.00px;height:0.80px;background:#ececec"></div>
<div class="t" style="left:250.70px;top:173.99px;font-size:5.33px;line-height:5.33px;color:#3c3c46;font-weight:400;transform-origin:0 4.51px;transform:scaleY(1.18);">Пальто-халат Harvey с...</div>
<div class="t" style="right:466.10px;top:173.99px;font-size:5.33px;line-height:5.33px;color:#3c3c46;font-weight:400;transform-origin:0 4.51px;transform:scaleY(1.18);">42</div>
<div class="t" style="right:412.80px;top:173.99px;font-size:5.33px;line-height:5.33px;color:#3c3c46;font-weight:400;transform-origin:0 4.51px;transform:scaleY(1.18);">714 215</div>
<div class="t" style="left:437.00px;top:173.99px;font-size:5.33px;line-height:5.33px;color:#3c3c46;font-weight:400;transform-origin:0 4.51px;transform:scaleY(1.18);">2</div>
<div style="left:249.30px;top:188.84px;width:245.00px;height:0.80px;background:#ececec"></div>
<div class="t" style="left:250.70px;top:183.41px;font-size:5.33px;line-height:5.33px;color:#3c3c46;font-weight:400;transform-origin:0 4.51px;transform:scaleY(1.18);">Пальто-тренч Dandy с ...</div>
<div class="t" style="right:466.10px;top:183.41px;font-size:5.33px;line-height:5.33px;color:#3c3c46;font-weight:400;transform-origin:0 4.51px;transform:scaleY(1.18);">42</div>
<div class="t" style="right:412.80px;top:183.41px;font-size:5.33px;line-height:5.33px;color:#3c3c46;font-weight:400;transform-origin:0 4.51px;transform:scaleY(1.18);">692 757</div>
<div class="t" style="left:437.00px;top:183.41px;font-size:5.33px;line-height:5.33px;color:#3c3c46;font-weight:400;transform-origin:0 4.51px;transform:scaleY(1.18);">2</div>
<div style="left:249.30px;top:198.26px;width:245.00px;height:0.80px;background:#ececec"></div>
<div class="t" style="left:250.70px;top:192.83px;font-size:5.33px;line-height:5.33px;color:#3c3c46;font-weight:400;transform-origin:0 4.51px;transform:scaleY(1.18);">Пальто-халат Petite SS...</div>
<div class="t" style="right:466.10px;top:192.83px;font-size:5.33px;line-height:5.33px;color:#3c3c46;font-weight:400;transform-origin:0 4.51px;transform:scaleY(1.18);">36</div>
<div class="t" style="right:412.80px;top:192.83px;font-size:5.33px;line-height:5.33px;color:#3c3c46;font-weight:400;transform-origin:0 4.51px;transform:scaleY(1.18);">619 074</div>
<div class="t" style="left:437.00px;top:192.83px;font-size:5.33px;line-height:5.33px;color:#3c3c46;font-weight:400;transform-origin:0 4.51px;transform:scaleY(1.18);">2</div>
<div style="left:249.30px;top:207.68px;width:245.00px;height:0.80px;background:#ececec"></div>
<div class="t" style="left:250.70px;top:202.25px;font-size:5.33px;line-height:5.33px;color:#3c3c46;font-weight:400;transform-origin:0 4.51px;transform:scaleY(1.18);">Пальто-халат Carrie с к...</div>
<div class="t" style="right:466.10px;top:202.25px;font-size:5.33px;line-height:5.33px;color:#3c3c46;font-weight:400;transform-origin:0 4.51px;transform:scaleY(1.18);">29</div>
<div class="t" style="right:412.80px;top:202.25px;font-size:5.33px;line-height:5.33px;color:#3c3c46;font-weight:400;transform-origin:0 4.51px;transform:scaleY(1.18);">492 658</div>
<div class="t" style="left:437.00px;top:202.25px;font-size:5.33px;line-height:5.33px;color:#3c3c46;font-weight:400;transform-origin:0 4.51px;transform:scaleY(1.18);">2</div>
<div style="left:249.30px;top:214.50px;width:245.00px;height:10.00px;background:#f0f0f0;border-top:1px solid #dedede"></div>
<div style="left:314.10px;top:214.50px;width:0.80px;height:10.00px;background:#e2e2e2"></div>
<div style="left:380.80px;top:214.50px;width:0.80px;height:10.00px;background:#e2e2e2"></div>
<div style="left:434.10px;top:214.50px;width:0.80px;height:10.00px;background:#e2e2e2"></div>
<div class="t" style="right:466.10px;top:217.49px;font-size:5.33px;line-height:5.33px;color:#3c3c46;font-weight:400;transform-origin:0 4.51px;transform:scaleY(1.18);">2 206</div>
<div class="t" style="right:412.80px;top:217.49px;font-size:5.33px;line-height:5.33px;color:#3c3c46;font-weight:400;transform-origin:0 4.51px;transform:scaleY(1.18);">17 150 860</div>
<div style="left:494.30px;top:114.20px;width:5.70px;height:110.30px;background:#fbfbfb"></div>
<div class="t" style="left:297.65px;width:400px;text-align:center;top:117.39px;font-size:4.5px;line-height:4.5px;color:#b5b5b5;font-weight:400;transform-origin:0 3.81px;transform:scaleY(1.18);">▴</div>
<div class="t" style="left:297.65px;width:400px;text-align:center;top:217.09px;font-size:4.5px;line-height:4.5px;color:#555;font-weight:400;transform-origin:0 3.81px;transform:scaleY(1.18);">▾</div>
<div style="left:495.50px;top:124.00px;width:3.10px;height:88.70px;background:#d9d9d9;border-radius:2px"></div>
<div style="left:495.50px;top:124.00px;width:3.10px;height:11.50px;background:#8c8c8c;border-radius:2px"></div>
<div style="left:513.50px;top:112.00px;width:320.75px;height:113.50px;border:1px solid #c8c8c8;background:#fff"></div>
<div style="left:515.00px;top:113.50px;width:312.00px;height:9.50px;background:#f0f0f0;border-bottom:1px solid #e0e0e0"></div>
<div style="left:599.10px;top:113.50px;width:0.80px;height:9.50px;background:#dcdcdc"></div>
<div style="left:683.00px;top:113.50px;width:0.80px;height:9.50px;background:#dcdcdc"></div>
<div style="left:750.80px;top:113.50px;width:0.80px;height:9.50px;background:#dcdcdc"></div>
<div class="t" style="left:356.80px;width:400px;text-align:center;top:116.09px;font-size:5.33px;line-height:5.33px;color:#555560;font-weight:400;transform-origin:0 4.51px;transform:scaleY(1.18);">Номенклатура</div>
<div class="t" style="left:441.55px;width:400px;text-align:center;top:116.09px;font-size:5.33px;line-height:5.33px;color:#555560;font-weight:400;transform-origin:0 4.51px;transform:scaleY(1.18);">Чек</div>
<div class="t" style="left:517.40px;width:400px;text-align:center;top:116.09px;font-size:5.33px;line-height:5.33px;color:#555560;font-weight:400;transform-origin:0 4.51px;transform:scaleY(1.18);">Сумма</div>
<div class="t" style="left:589.15px;width:400px;text-align:center;top:116.09px;font-size:5.33px;line-height:5.33px;color:#555560;font-weight:400;transform-origin:0 4.51px;transform:scaleY(1.18);">Длина чека, среднее</div>
<div style="left:515.00px;top:123.50px;width:312.00px;height:7.71px;background:#ececec"></div>
<div style="left:515.00px;top:123.50px;width:84.10px;height:7.71px;background:#d6d6d6"></div>
<div style="left:515.00px;top:131.91px;width:312.00px;height:0.80px;background:#ececec"></div>
<div class="t" style="left:516.40px;top:125.99px;font-size:5.33px;line-height:5.33px;color:#3c3c46;font-weight:400;transform-origin:0 4.51px;transform:scaleY(1.18);">Тренч SS20</div>
<div class="t" style="right:163.90px;top:125.99px;font-size:5.33px;line-height:5.33px;color:#3c3c46;font-weight:400;transform-origin:0 4.51px;transform:scaleY(1.18);">115</div>
<div class="t" style="right:96.10px;top:125.99px;font-size:5.33px;line-height:5.33px;color:#3c3c46;font-weight:400;transform-origin:0 4.51px;transform:scaleY(1.18);">1 234 689</div>
<div class="t" style="right:20.40px;top:125.99px;font-size:5.33px;line-height:5.33px;color:#3c3c46;font-weight:400;transform-origin:0 4.51px;transform:scaleY(1.18);">2</div>
<div style="left:515.00px;top:141.32px;width:312.00px;height:0.80px;background:#ececec"></div>
<div class="t" style="left:516.40px;top:135.40px;font-size:5.33px;line-height:5.33px;color:#3c3c46;font-weight:400;transform-origin:0 4.51px;transform:scaleY(1.18);">Пальто-халат Harvey со спуще...</div>
<div class="t" style="right:163.90px;top:135.40px;font-size:5.33px;line-height:5.33px;color:#3c3c46;font-weight:400;transform-origin:0 4.51px;transform:scaleY(1.18);">64</div>
<div class="t" style="right:96.10px;top:135.40px;font-size:5.33px;line-height:5.33px;color:#3c3c46;font-weight:400;transform-origin:0 4.51px;transform:scaleY(1.18);">1 120 980</div>
<div class="t" style="right:20.40px;top:135.40px;font-size:5.33px;line-height:5.33px;color:#3c3c46;font-weight:400;transform-origin:0 4.51px;transform:scaleY(1.18);">2</div>
<div style="left:515.00px;top:150.73px;width:312.00px;height:0.80px;background:#ececec"></div>
<div class="t" style="left:516.40px;top:144.81px;font-size:5.33px;line-height:5.33px;color:#3c3c46;font-weight:400;transform-origin:0 4.51px;transform:scaleY(1.18);">Пальто-халат Carrie с классич...</div>
<div class="t" style="right:163.90px;top:144.81px;font-size:5.33px;line-height:5.33px;color:#3c3c46;font-weight:400;transform-origin:0 4.51px;transform:scaleY(1.18);">48</div>
<div class="t" style="right:96.10px;top:144.81px;font-size:5.33px;line-height:5.33px;color:#3c3c46;font-weight:400;transform-origin:0 4.51px;transform:scaleY(1.18);">915 390</div>
<div class="t" style="right:20.40px;top:144.81px;font-size:5.33px;line-height:5.33px;color:#3c3c46;font-weight:400;transform-origin:0 4.51px;transform:scaleY(1.18);">2</div>
<div style="left:515.00px;top:160.14px;width:312.00px;height:0.80px;background:#ececec"></div>
<div class="t" style="left:516.40px;top:154.22px;font-size:5.33px;line-height:5.33px;color:#3c3c46;font-weight:400;transform-origin:0 4.51px;transform:scaleY(1.18);">Пальто двубортное Liam прям...</div>
<div class="t" style="right:163.90px;top:154.22px;font-size:5.33px;line-height:5.33px;color:#3c3c46;font-weight:400;transform-origin:0 4.51px;transform:scaleY(1.18);">48</div>
<div class="t" style="right:96.10px;top:154.22px;font-size:5.33px;line-height:5.33px;color:#3c3c46;font-weight:400;transform-origin:0 4.51px;transform:scaleY(1.18);">862 956</div>
<div class="t" style="right:20.40px;top:154.22px;font-size:5.33px;line-height:5.33px;color:#3c3c46;font-weight:400;transform-origin:0 4.51px;transform:scaleY(1.18);">2</div>
<div style="left:515.00px;top:169.55px;width:312.00px;height:0.80px;background:#ececec"></div>
<div class="t" style="left:516.40px;top:163.63px;font-size:5.33px;line-height:5.33px;color:#3c3c46;font-weight:400;transform-origin:0 4.51px;transform:scaleY(1.18);">Пальто-тренч Silvia SS20</div>
<div class="t" style="right:163.90px;top:163.63px;font-size:5.33px;line-height:5.33px;color:#3c3c46;font-weight:400;transform-origin:0 4.51px;transform:scaleY(1.18);">43</div>
<div class="t" style="right:96.10px;top:163.63px;font-size:5.33px;line-height:5.33px;color:#3c3c46;font-weight:400;transform-origin:0 4.51px;transform:scaleY(1.18);">801 734</div>
<div class="t" style="right:20.40px;top:163.63px;font-size:5.33px;line-height:5.33px;color:#3c3c46;font-weight:400;transform-origin:0 4.51px;transform:scaleY(1.18);">2</div>
<div style="left:515.00px;top:178.96px;width:312.00px;height:0.80px;background:#ececec"></div>
<div class="t" style="left:516.40px;top:173.04px;font-size:5.33px;line-height:5.33px;color:#3c3c46;font-weight:400;transform-origin:0 4.51px;transform:scaleY(1.18);">Пальто-халат Harvey со спуще...</div>
<div class="t" style="right:163.90px;top:173.04px;font-size:5.33px;line-height:5.33px;color:#3c3c46;font-weight:400;transform-origin:0 4.51px;transform:scaleY(1.18);">42</div>
<div class="t" style="right:96.10px;top:173.04px;font-size:5.33px;line-height:5.33px;color:#3c3c46;font-weight:400;transform-origin:0 4.51px;transform:scaleY(1.18);">714 215</div>
<div class="t" style="right:20.40px;top:173.04px;font-size:5.33px;line-height:5.33px;color:#3c3c46;font-weight:400;transform-origin:0 4.51px;transform:scaleY(1.18);">2</div>
<div style="left:515.00px;top:188.37px;width:312.00px;height:0.80px;background:#ececec"></div>
<div class="t" style="left:516.40px;top:182.45px;font-size:5.33px;line-height:5.33px;color:#3c3c46;font-weight:400;transform-origin:0 4.51px;transform:scaleY(1.18);">Пальто-тренч Dandy с поясом ...</div>
<div class="t" style="right:163.90px;top:182.45px;font-size:5.33px;line-height:5.33px;color:#3c3c46;font-weight:400;transform-origin:0 4.51px;transform:scaleY(1.18);">42</div>
<div class="t" style="right:96.10px;top:182.45px;font-size:5.33px;line-height:5.33px;color:#3c3c46;font-weight:400;transform-origin:0 4.51px;transform:scaleY(1.18);">692 757</div>
<div class="t" style="right:20.40px;top:182.45px;font-size:5.33px;line-height:5.33px;color:#3c3c46;font-weight:400;transform-origin:0 4.51px;transform:scaleY(1.18);">2</div>
<div style="left:515.00px;top:197.78px;width:312.00px;height:0.80px;background:#ececec"></div>
<div class="t" style="left:516.40px;top:191.86px;font-size:5.33px;line-height:5.33px;color:#3c3c46;font-weight:400;transform-origin:0 4.51px;transform:scaleY(1.18);">Пальто-халат Petite SS20</div>
<div class="t" style="right:163.90px;top:191.86px;font-size:5.33px;line-height:5.33px;color:#3c3c46;font-weight:400;transform-origin:0 4.51px;transform:scaleY(1.18);">36</div>
<div class="t" style="right:96.10px;top:191.86px;font-size:5.33px;line-height:5.33px;color:#3c3c46;font-weight:400;transform-origin:0 4.51px;transform:scaleY(1.18);">619 074</div>
<div class="t" style="right:20.40px;top:191.86px;font-size:5.33px;line-height:5.33px;color:#3c3c46;font-weight:400;transform-origin:0 4.51px;transform:scaleY(1.18);">2</div>
<div style="left:515.00px;top:207.19px;width:312.00px;height:0.80px;background:#ececec"></div>
<div class="t" style="left:516.40px;top:201.27px;font-size:5.33px;line-height:5.33px;color:#3c3c46;font-weight:400;transform-origin:0 4.51px;transform:scaleY(1.18);">Пальто-халат Carrie с классич...</div>
<div class="t" style="right:163.90px;top:201.27px;font-size:5.33px;line-height:5.33px;color:#3c3c46;font-weight:400;transform-origin:0 4.51px;transform:scaleY(1.18);">29</div>
<div class="t" style="right:96.10px;top:201.27px;font-size:5.33px;line-height:5.33px;color:#3c3c46;font-weight:400;transform-origin:0 4.51px;transform:scaleY(1.18);">492 658</div>
<div class="t" style="right:20.40px;top:201.27px;font-size:5.33px;line-height:5.33px;color:#3c3c46;font-weight:400;transform-origin:0 4.51px;transform:scaleY(1.18);">2</div>
<div style="left:515.00px;top:214.00px;width:312.00px;height:10.00px;background:#f0f0f0;border-top:1px solid #dedede"></div>
<div style="left:599.10px;top:214.00px;width:0.80px;height:10.00px;background:#e2e2e2"></div>
<div style="left:683.00px;top:214.00px;width:0.80px;height:10.00px;background:#e2e2e2"></div>
<div style="left:750.80px;top:214.00px;width:0.80px;height:10.00px;background:#e2e2e2"></div>
<div class="t" style="left:516.40px;top:216.99px;font-size:5.33px;line-height:5.33px;color:#3c3c46;font-weight:400;transform-origin:0 4.51px;transform:scaleY(1.18);">0</div>
<div class="t" style="right:163.90px;top:216.99px;font-size:5.33px;line-height:5.33px;color:#3c3c46;font-weight:400;transform-origin:0 4.51px;transform:scaleY(1.18);">2 206</div>
<div class="t" style="right:96.10px;top:216.99px;font-size:5.33px;line-height:5.33px;color:#3c3c46;font-weight:400;transform-origin:0 4.51px;transform:scaleY(1.18);">17 150 860</div>
<div style="left:827.00px;top:113.50px;width:5.75px;height:110.50px;background:#fbfbfb"></div>
<div class="t" style="left:630.38px;width:400px;text-align:center;top:116.69px;font-size:4.5px;line-height:4.5px;color:#b5b5b5;font-weight:400;transform-origin:0 3.81px;transform:scaleY(1.18);">▴</div>
<div class="t" style="left:630.38px;width:400px;text-align:center;top:216.59px;font-size:4.5px;line-height:4.5px;color:#555;font-weight:400;transform-origin:0 3.81px;transform:scaleY(1.18);">▾</div>
<div style="left:828.20px;top:123.00px;width:3.15px;height:89.50px;background:#d9d9d9;border-radius:2px"></div>
<div style="left:828.20px;top:123.00px;width:3.15px;height:5.00px;background:#8c8c8c;border-radius:2px"></div>
<div style="left:6.70px;top:257.90px;width:226.40px;height:216.90px;border:1px solid #cdcdcd;background:#fff"></div>
<svg style="left:0;top:0" width="845" height="480"><line x1="24.5" y1="433.80" x2="187" y2="433.80" stroke="#e6e6e6" stroke-width="0.8"/><line x1="22.8" y1="433.80" x2="24.5" y2="433.80" stroke="#b8b8b8" stroke-width="0.7"/><line x1="24.5" y1="412.60" x2="187" y2="412.60" stroke="#e6e6e6" stroke-width="0.8"/><line x1="22.8" y1="412.60" x2="24.5" y2="412.60" stroke="#b8b8b8" stroke-width="0.7"/><line x1="24.5" y1="391.40" x2="187" y2="391.40" stroke="#e6e6e6" stroke-width="0.8"/><line x1="22.8" y1="391.40" x2="24.5" y2="391.40" stroke="#b8b8b8" stroke-width="0.7"/><line x1="24.5" y1="370.20" x2="187" y2="370.20" stroke="#e6e6e6" stroke-width="0.8"/><line x1="22.8" y1="370.20" x2="24.5" y2="370.20" stroke="#b8b8b8" stroke-width="0.7"/><line x1="24.5" y1="349.00" x2="187" y2="349.00" stroke="#e6e6e6" stroke-width="0.8"/><line x1="22.8" y1="349.00" x2="24.5" y2="349.00" stroke="#b8b8b8" stroke-width="0.7"/><line x1="24.5" y1="327.80" x2="187" y2="327.80" stroke="#e6e6e6" stroke-width="0.8"/><line x1="22.8" y1="327.80" x2="24.5" y2="327.80" stroke="#b8b8b8" stroke-width="0.7"/><line x1="24.5" y1="306.60" x2="187" y2="306.60" stroke="#e6e6e6" stroke-width="0.8"/><line x1="22.8" y1="306.60" x2="24.5" y2="306.60" stroke="#b8b8b8" stroke-width="0.7"/><line x1="24.5" y1="285.40" x2="187" y2="285.40" stroke="#e6e6e6" stroke-width="0.8"/><line x1="22.8" y1="285.40" x2="24.5" y2="285.40" stroke="#b8b8b8" stroke-width="0.7"/><line x1="24.5" y1="264.20" x2="187" y2="264.20" stroke="#e6e6e6" stroke-width="0.8"/><line x1="22.8" y1="264.20" x2="24.5" y2="264.20" stroke="#b8b8b8" stroke-width="0.7"/><line x1="24.6" y1="262" x2="24.6" y2="455.5" stroke="#d9d9d9" stroke-width="1"/><line x1="24.5" y1="455.2" x2="187" y2="455.2" stroke="#cfcfcf" stroke-width="0.8"/><line x1="65.4" y1="455.2" x2="65.4" y2="456.8" stroke="#b0b0b0" stroke-width="0.6"/><line x1="106" y1="455.2" x2="106" y2="456.8" stroke="#b0b0b0" stroke-width="0.6"/><line x1="146.6" y1="455.2" x2="146.6" y2="456.8" stroke="#b0b0b0" stroke-width="0.6"/><line x1="187" y1="455.2" x2="187" y2="456.8" stroke="#b0b0b0" stroke-width="0.6"/><rect x="31.8" y="267.2" width="27.10" height="187.80" fill="#079142"/><rect x="71.8" y="414.7" width="27.50" height="40.30" fill="#079142"/><rect x="112.3" y="452.0" width="27.40" height="3.00" fill="#079142"/><rect x="153.2" y="414.7" width="27.10" height="40.30" fill="#079142"/><rect x="190.3" y="363.4" width="6.6" height="6.5" fill="#079142"/></svg>
<div class="t" style="right:822.00px;top:431.30px;font-size:5.2px;line-height:5.2px;color:#4a4a55;font-weight:400;transform-origin:0 4.40px;transform:scaleY(1.18);">100</div>
<div class="t" style="right:822.00px;top:410.10px;font-size:5.2px;line-height:5.2px;color:#4a4a55;font-weight:400;transform-origin:0 4.40px;transform:scaleY(1.18);">200</div>
<div class="t" style="right:822.00px;top:388.90px;font-size:5.2px;line-height:5.2px;color:#4a4a55;font-weight:400;transform-origin:0 4.40px;transform:scaleY(1.18);">300</div>
<div class="t" style="right:822.00px;top:367.70px;font-size:5.2px;line-height:5.2px;color:#4a4a55;font-weight:400;transform-origin:0 4.40px;transform:scaleY(1.18);">400</div>
<div class="t" style="right:822.00px;top:346.50px;font-size:5.2px;line-height:5.2px;color:#4a4a55;font-weight:400;transform-origin:0 4.40px;transform:scaleY(1.18);">500</div>
<div class="t" style="right:822.00px;top:325.30px;font-size:5.2px;line-height:5.2px;color:#4a4a55;font-weight:400;transform-origin:0 4.40px;transform:scaleY(1.18);">600</div>
<div class="t" style="right:822.00px;top:304.10px;font-size:5.2px;line-height:5.2px;color:#4a4a55;font-weight:400;transform-origin:0 4.40px;transform:scaleY(1.18);">700</div>
<div class="t" style="right:822.00px;top:282.90px;font-size:5.2px;line-height:5.2px;color:#4a4a55;font-weight:400;transform-origin:0 4.40px;transform:scaleY(1.18);">800</div>
<div class="t" style="right:822.00px;top:261.70px;font-size:5.2px;line-height:5.2px;color:#4a4a55;font-weight:400;transform-origin:0 4.40px;transform:scaleY(1.18);">900</div>
<div class="t" style="left:197.30px;top:364.73px;font-size:5.4px;line-height:5.4px;color:#3c3c46;font-weight:400;transform-origin:0 4.57px;transform:scaleY(1.18);">Кол-во чеков</div>
<svg style="left:0;top:0" width="845" height="480"><defs><filter id="sh" x="-20%" y="-100%" width="140%" height="300%"><feGaussianBlur in="SourceAlpha" stdDeviation="0.9"/><feOffset dx="0.6" dy="1.1" result="b"/><feFlood flood-color="#000" flood-opacity="0.6"/><feComposite in2="b" operator="in"/><feMerge><feMergeNode/><feMergeNode in="SourceGraphic"/></feMerge></filter></defs><g filter="url(#sh)" fill="#767676" stroke="#767676"><line x1="10.7" y1="461.1" x2="148" y2="461.1" stroke-width="4.6"/><circle cx="10.7" cy="461.1" r="4.8" stroke="none"/><circle cx="148" cy="461.1" r="4.8" stroke="none"/><line x1="54.9" y1="467" x2="181.8" y2="467" stroke-width="4.6"/><circle cx="54.9" cy="467" r="4.8" stroke="none"/><circle cx="181.8" cy="467" r="4.8" stroke="none"/></g></svg>
<div style="left:240.30px;top:244.10px;width:275.80px;height:233.90px;border:1px solid #c8c8c8;background:#fff"></div>
<div style="left:241.80px;top:245.60px;width:272.80px;height:10.00px;background:#f0f0f0;border-bottom:1px solid #e0e0e0"></div>
<div style="left:338.00px;top:245.60px;width:0.80px;height:10.00px;background:#dcdcdc"></div>
<div style="left:436.20px;top:245.60px;width:0.80px;height:10.00px;background:#dcdcdc"></div>
<div class="t" style="left:89.65px;width:400px;text-align:center;top:247.89px;font-size:5.33px;line-height:5.33px;color:#555560;font-weight:400;transform-origin:0 4.51px;transform:scaleY(1.18);">Продавец</div>
<div class="t" style="left:187.60px;width:400px;text-align:center;top:247.89px;font-size:5.33px;line-height:5.33px;color:#555560;font-weight:400;transform-origin:0 4.51px;transform:scaleY(1.18);">Кол-во чеков</div>
<div class="t" style="left:276.15px;width:400px;text-align:center;top:247.89px;font-size:5.33px;line-height:5.33px;color:#555560;font-weight:400;transform-origin:0 4.51px;transform:scaleY(1.18);">Сумма</div>
<div style="left:241.80px;top:256.20px;width:272.80px;height:7.59px;background:#ececec"></div>
<div style="left:241.80px;top:256.20px;width:95.80px;height:7.59px;background:#d4d4d4"></div>
<div style="left:241.80px;top:264.89px;width:272.80px;height:0.80px;background:#ededed"></div>
<div class="t" style="left:243.00px;top:258.49px;font-size:5.33px;line-height:5.33px;color:#3c3c46;font-weight:400;transform-origin:0 4.51px;transform:scaleY(1.18);">Курон</div>
<div class="t" style="left:340.80px;top:258.49px;font-size:5.33px;line-height:5.33px;color:#3c3c46;font-weight:400;transform-origin:0 4.51px;transform:scaleY(1.18);">173</div>
<div class="t" style="left:438.20px;top:258.49px;font-size:5.33px;line-height:5.33px;color:#3c3c46;font-weight:400;transform-origin:0 4.51px;transform:scaleY(1.18);">2 619 056</div>
<div style="left:241.80px;top:274.28px;width:272.80px;height:0.80px;background:#ededed"></div>
<div class="t" style="left:340.80px;top:267.88px;font-size:5.33px;line-height:5.33px;color:#3c3c46;font-weight:400;transform-origin:0 4.51px;transform:scaleY(1.18);">293</div>
<div class="t" style="left:438.20px;top:267.88px;font-size:5.33px;line-height:5.33px;color:#3c3c46;font-weight:400;transform-origin:0 4.51px;transform:scaleY(1.18);">2 763 435</div>
<div style="left:241.80px;top:283.67px;width:272.80px;height:0.80px;background:#ededed"></div>
<div class="t" style="left:243.00px;top:277.27px;font-size:5.33px;line-height:5.33px;color:#3c3c46;font-weight:400;transform-origin:0 4.51px;transform:scaleY(1.18);">Тетер</div>
<div class="t" style="left:340.80px;top:277.27px;font-size:5.33px;line-height:5.33px;color:#3c3c46;font-weight:400;transform-origin:0 4.51px;transform:scaleY(1.18);">158</div>
<div class="t" style="left:438.20px;top:277.27px;font-size:5.33px;line-height:5.33px;color:#3c3c46;font-weight:400;transform-origin:0 4.51px;transform:scaleY(1.18);">2 405 341</div>
<div style="left:241.80px;top:293.06px;width:272.80px;height:0.80px;background:#ededed"></div>
<div class="t" style="left:243.00px;top:286.66px;font-size:5.33px;line-height:5.33px;color:#3c3c46;font-weight:400;transform-origin:0 4.51px;transform:scaleY(1.18);">Ведут</div>
<div class="t" style="left:318.20px;top:286.66px;font-size:5.33px;line-height:5.33px;color:#3c3c46;font-weight:400;transform-origin:0 4.51px;transform:scaleY(1.18);">вна</div>
<div class="t" style="left:340.80px;top:286.66px;font-size:5.33px;line-height:5.33px;color:#3c3c46;font-weight:400;transform-origin:0 4.51px;transform:scaleY(1.18);">27</div>
<div class="t" style="left:438.20px;top:286.66px;font-size:5.33px;line-height:5.33px;color:#3c3c46;font-weight:400;transform-origin:0 4.51px;transform:scaleY(1.18);">373 080</div>
<div style="left:241.80px;top:302.45px;width:272.80px;height:0.80px;background:#ededed"></div>
<div class="t" style="left:243.00px;top:296.05px;font-size:5.33px;line-height:5.33px;color:#3c3c46;font-weight:400;transform-origin:0 4.51px;transform:scaleY(1.18);">Чиков</div>
<div class="t" style="left:318.20px;top:296.05px;font-size:5.33px;line-height:5.33px;color:#3c3c46;font-weight:400;transform-origin:0 4.51px;transform:scaleY(1.18);">а</div>
<div class="t" style="left:340.80px;top:296.05px;font-size:5.33px;line-height:5.33px;color:#3c3c46;font-weight:400;transform-origin:0 4.51px;transform:scaleY(1.18);">168</div>
<div class="t" style="left:438.20px;top:296.05px;font-size:5.33px;line-height:5.33px;color:#3c3c46;font-weight:400;transform-origin:0 4.51px;transform:scaleY(1.18);">2 443 346</div>
<div style="left:241.80px;top:311.84px;width:272.80px;height:0.80px;background:#ededed"></div>
<div class="t" style="left:243.00px;top:305.44px;font-size:5.33px;line-height:5.33px;color:#3c3c46;font-weight:400;transform-origin:0 4.51px;transform:scaleY(1.18);">Чечёт</div>
<div class="t" style="left:318.20px;top:305.44px;font-size:5.33px;line-height:5.33px;color:#3c3c46;font-weight:400;transform-origin:0 4.51px;transform:scaleY(1.18);">дровна</div>
<div class="t" style="left:340.80px;top:305.44px;font-size:5.33px;line-height:5.33px;color:#3c3c46;font-weight:400;transform-origin:0 4.51px;transform:scaleY(1.18);">41</div>
<div class="t" style="left:438.20px;top:305.44px;font-size:5.33px;line-height:5.33px;color:#3c3c46;font-weight:400;transform-origin:0 4.51px;transform:scaleY(1.18);">603 004</div>
<div style="left:241.80px;top:321.23px;width:272.80px;height:0.80px;background:#ededed"></div>
<div class="t" style="left:243.00px;top:314.83px;font-size:5.33px;line-height:5.33px;color:#3c3c46;font-weight:400;transform-origin:0 4.51px;transform:scaleY(1.18);">Петро</div>
<div class="t" style="left:340.80px;top:314.83px;font-size:5.33px;line-height:5.33px;color:#3c3c46;font-weight:400;transform-origin:0 4.51px;transform:scaleY(1.18);">50</div>
<div class="t" style="left:438.20px;top:314.83px;font-size:5.33px;line-height:5.33px;color:#3c3c46;font-weight:400;transform-origin:0 4.51px;transform:scaleY(1.18);">678 696</div>
<div style="left:241.80px;top:330.62px;width:272.80px;height:0.80px;background:#ededed"></div>
<div class="t" style="left:243.00px;top:324.22px;font-size:5.33px;line-height:5.33px;color:#3c3c46;font-weight:400;transform-origin:0 4.51px;transform:scaleY(1.18);">Гнезд</div>
<div class="t" style="left:318.20px;top:324.22px;font-size:5.33px;line-height:5.33px;color:#3c3c46;font-weight:400;transform-origin:0 4.51px;transform:scaleY(1.18);">а</div>
<div class="t" style="left:340.80px;top:324.22px;font-size:5.33px;line-height:5.33px;color:#3c3c46;font-weight:400;transform-origin:0 4.51px;transform:scaleY(1.18);">38</div>
<div class="t" style="left:438.20px;top:324.22px;font-size:5.33px;line-height:5.33px;color:#3c3c46;font-weight:400;transform-origin:0 4.51px;transform:scaleY(1.18);">539 238</div>
<div style="left:241.80px;top:340.01px;width:272.80px;height:0.80px;background:#ededed"></div>
<div class="t" style="left:243.00px;top:333.61px;font-size:5.33px;line-height:5.33px;color:#3c3c46;font-weight:400;transform-origin:0 4.51px;transform:scaleY(1.18);">Милан</div>
<div class="t" style="left:340.80px;top:333.61px;font-size:5.33px;line-height:5.33px;color:#3c3c46;font-weight:400;transform-origin:0 4.51px;transform:scaleY(1.18);">7</div>
<div class="t" style="left:438.20px;top:333.61px;font-size:5.33px;line-height:5.33px;color:#3c3c46;font-weight:400;transform-origin:0 4.51px;transform:scaleY(1.18);">91 444</div>
<div style="left:241.80px;top:349.40px;width:272.80px;height:0.80px;background:#ededed"></div>
<div class="t" style="left:243.00px;top:343.00px;font-size:5.33px;line-height:5.33px;color:#3c3c46;font-weight:400;transform-origin:0 4.51px;transform:scaleY(1.18);">Орлов</div>
<div class="t" style="left:340.80px;top:343.00px;font-size:5.33px;line-height:5.33px;color:#3c3c46;font-weight:400;transform-origin:0 4.51px;transform:scaleY(1.18);">9</div>
<div class="t" style="left:438.20px;top:343.00px;font-size:5.33px;line-height:5.33px;color:#3c3c46;font-weight:400;transform-origin:0 4.51px;transform:scaleY(1.18);">108 016</div>
<div style="left:241.80px;top:358.79px;width:272.80px;height:0.80px;background:#ededed"></div>
<div class="t" style="left:243.00px;top:352.39px;font-size:5.33px;line-height:5.33px;color:#3c3c46;font-weight:400;transform-origin:0 4.51px;transform:scaleY(1.18);">Галим</div>
<div class="t" style="left:318.20px;top:352.39px;font-size:5.33px;line-height:5.33px;color:#3c3c46;font-weight:400;transform-origin:0 4.51px;transform:scaleY(1.18);">вна</div>
<div class="t" style="left:340.80px;top:352.39px;font-size:5.33px;line-height:5.33px;color:#3c3c46;font-weight:400;transform-origin:0 4.51px;transform:scaleY(1.18);">140</div>
<div class="t" style="left:438.20px;top:352.39px;font-size:5.33px;line-height:5.33px;color:#3c3c46;font-weight:400;transform-origin:0 4.51px;transform:scaleY(1.18);">2 117 853</div>
<div style="left:241.80px;top:368.18px;width:272.80px;height:0.80px;background:#ededed"></div>
<div class="t" style="left:243.00px;top:361.78px;font-size:5.33px;line-height:5.33px;color:#3c3c46;font-weight:400;transform-origin:0 4.51px;transform:scaleY(1.18);">Петро</div>
<div class="t" style="left:318.20px;top:361.78px;font-size:5.33px;line-height:5.33px;color:#3c3c46;font-weight:400;transform-origin:0 4.51px;transform:scaleY(1.18);">дровна</div>
<div class="t" style="left:340.80px;top:361.78px;font-size:5.33px;line-height:5.33px;color:#3c3c46;font-weight:400;transform-origin:0 4.51px;transform:scaleY(1.18);">2</div>
<div class="t" style="left:438.20px;top:361.78px;font-size:5.33px;line-height:5.33px;color:#3c3c46;font-weight:400;transform-origin:0 4.51px;transform:scaleY(1.18);">13 616</div>
<div style="left:241.80px;top:377.57px;width:272.80px;height:0.80px;background:#ededed"></div>
<div class="t" style="left:243.00px;top:371.17px;font-size:5.33px;line-height:5.33px;color:#3c3c46;font-weight:400;transform-origin:0 4.51px;transform:scaleY(1.18);">Джоб</div>
<div class="t" style="left:340.80px;top:371.17px;font-size:5.33px;line-height:5.33px;color:#3c3c46;font-weight:400;transform-origin:0 4.51px;transform:scaleY(1.18);">160</div>
<div class="t" style="left:438.20px;top:371.17px;font-size:5.33px;line-height:5.33px;color:#3c3c46;font-weight:400;transform-origin:0 4.51px;transform:scaleY(1.18);">2 394 732</div>
<div style="left:241.80px;top:386.96px;width:272.80px;height:0.80px;background:#ededed"></div>
<div class="t" style="left:243.00px;top:380.56px;font-size:5.33px;line-height:5.33px;color:#3c3c46;font-weight:400;transform-origin:0 4.51px;transform:scaleY(1.18);">Ивано</div>
<div class="t" style="left:340.80px;top:380.56px;font-size:5.33px;line-height:5.33px;color:#3c3c46;font-weight:400;transform-origin:0 4.51px;transform:scaleY(1.18);">5</div>
<div class="t" style="left:438.20px;top:380.56px;font-size:5.33px;line-height:5.33px;color:#3c3c46;font-weight:400;transform-origin:0 4.51px;transform:scaleY(1.18);">5</div>
<div style="left:258.30px;top:257.60px;width:59.10px;height:131.00px;background:#fff;border:0.9px solid #5a5a5a;border-right:1.4px solid #505050;border-bottom:1.2px solid #555;border-top-color:#777;box-shadow:1.2px 1.4px 1.8px rgba(0,0,0,0.6)"></div>
<div style="left:524.20px;top:258.00px;width:309.80px;height:216.90px;border:1px solid #cdcdcd;background:#fff"></div>
<svg style="left:0;top:0" width="845" height="480"><polygon points="552.20,444.75 552.20,410.30 557.55,400.80 562.90,371.00 568.25,341.90 573.60,347.00 578.95,362.50 584.30,397.50 589.65,382.70 595.00,383.30 600.35,372.40 605.70,306.90 611.05,306.90 616.40,276.60 621.75,389.90 627.10,357.00 632.45,379.00 637.80,384.90 643.15,358.60 648.50,392.00 653.85,425.60 659.20,416.20 664.55,400.20 669.90,421.60 675.25,360.00 680.60,312.60 685.95,289.90 691.30,388.80 696.65,390.50 702.00,368.00 707.35,377.40 712.70,404.10 718.05,420.00 723.40,433.10 728.75,424.70 734.10,427.90 739.45,428.40 744.80,423.75 750.15,426.00 755.50,437.80 760.85,422.80 766.20,431.25 771.55,428.40 776.90,426.60 782.25,422.80 787.60,430.30 792.95,438.75 798.30,420.40 803.65,421.10 803.65,444.75" fill="#9cd5b1"/><line x1="552" y1="414.55" x2="804.5" y2="414.55" stroke="rgba(0,0,0,0.075)" stroke-width="0.8"/><line x1="550.3" y1="414.55" x2="552" y2="414.55" stroke="#b8b8b8" stroke-width="0.7"/><line x1="552" y1="384.35" x2="804.5" y2="384.35" stroke="rgba(0,0,0,0.075)" stroke-width="0.8"/><line x1="550.3" y1="384.35" x2="552" y2="384.35" stroke="#b8b8b8" stroke-width="0.7"/><line x1="552" y1="354.15" x2="804.5" y2="354.15" stroke="rgba(0,0,0,0.075)" stroke-width="0.8"/><line x1="550.3" y1="354.15" x2="552" y2="354.15" stroke="#b8b8b8" stroke-width="0.7"/><line x1="552" y1="323.95" x2="804.5" y2="323.95" stroke="rgba(0,0,0,0.075)" stroke-width="0.8"/><line x1="550.3" y1="323.95" x2="552" y2="323.95" stroke="#b8b8b8" stroke-width="0.7"/><line x1="552" y1="293.75" x2="804.5" y2="293.75" stroke="rgba(0,0,0,0.075)" stroke-width="0.8"/><line x1="550.3" y1="293.75" x2="552" y2="293.75" stroke="#b8b8b8" stroke-width="0.7"/><line x1="552" y1="263.55" x2="804.5" y2="263.55" stroke="rgba(0,0,0,0.075)" stroke-width="0.8"/><line x1="550.3" y1="263.55" x2="552" y2="263.55" stroke="#b8b8b8" stroke-width="0.7"/><line x1="551.7" y1="262" x2="551.7" y2="445.5" stroke="#d9d9d9" stroke-width="1"/><line x1="552" y1="445.05" x2="804.5" y2="445.05" stroke="#d0d0d0" stroke-width="0.6"/><line x1="552.20" y1="444.75" x2="552.20" y2="446.25" stroke="#b0b0b0" stroke-width="0.6"/><line x1="562.90" y1="444.75" x2="562.90" y2="446.25" stroke="#b0b0b0" stroke-width="0.6"/><line x1="573.60" y1="444.75" x2="573.60" y2="446.25" stroke="#b0b0b0" stroke-width="0.6"/><line x1="584.30" y1="444.75" x2="584.30" y2="446.25" stroke="#b0b0b0" stroke-width="0.6"/><line x1="595.00" y1="444.75" x2="595.00" y2="446.25" stroke="#b0b0b0" stroke-width="0.6"/><line x1="605.70" y1="444.75" x2="605.70" y2="446.25" stroke="#b0b0b0" stroke-width="0.6"/><line x1="616.40" y1="444.75" x2="616.40" y2="446.25" stroke="#b0b0b0" stroke-width="0.6"/><line x1="627.10" y1="444.75" x2="627.10" y2="446.25" stroke="#b0b0b0" stroke-width="0.6"/><line x1="637.80" y1="444.75" x2="637.80" y2="446.25" stroke="#b0b0b0" stroke-width="0.6"/><line x1="648.50" y1="444.75" x2="648.50" y2="446.25" stroke="#b0b0b0" stroke-width="0.6"/><line x1="659.20" y1="444.75" x2="659.20" y2="446.25" stroke="#b0b0b0" stroke-width="0.6"/><line x1="669.90" y1="444.75" x2="669.90" y2="446.25" stroke="#b0b0b0" stroke-width="0.6"/><line x1="680.60" y1="444.75" x2="680.60" y2="446.25" stroke="#b0b0b0" stroke-width="0.6"/><line x1="691.30" y1="444.75" x2="691.30" y2="446.25" stroke="#b0b0b0" stroke-width="0.6"/><line x1="702.00" y1="444.75" x2="702.00" y2="446.25" stroke="#b0b0b0" stroke-width="0.6"/><line x1="712.70" y1="444.75" x2="712.70" y2="446.25" stroke="#b0b0b0" stroke-width="0.6"/><line x1="723.40" y1="444.75" x2="723.40" y2="446.25" stroke="#b0b0b0" stroke-width="0.6"/><line x1="734.10" y1="444.75" x2="734.10" y2="446.25" stroke="#b0b0b0" stroke-width="0.6"/><line x1="744.80" y1="444.75" x2="744.80" y2="446.25" stroke="#b0b0b0" stroke-width="0.6"/><line x1="755.50" y1="444.75" x2="755.50" y2="446.25" stroke="#b0b0b0" stroke-width="0.6"/><line x1="766.20" y1="444.75" x2="766.20" y2="446.25" stroke="#b0b0b0" stroke-width="0.6"/><line x1="776.90" y1="444.75" x2="776.90" y2="446.25" stroke="#b0b0b0" stroke-width="0.6"/><line x1="787.60" y1="444.75" x2="787.60" y2="446.25" stroke="#b0b0b0" stroke-width="0.6"/><line x1="798.30" y1="444.75" x2="798.30" y2="446.25" stroke="#b0b0b0" stroke-width="0.6"/><rect x="808.3" y="364.2" width="5.9" height="5.8" fill="#079142"/></svg>
<div class="t" style="right:295.00px;top:412.09px;font-size:5.15px;line-height:5.15px;color:#4a4a55;font-weight:400;transform-origin:0 4.36px;transform:scaleY(1.18);">200 000</div>
<div class="t" style="right:295.00px;top:381.89px;font-size:5.15px;line-height:5.15px;color:#4a4a55;font-weight:400;transform-origin:0 4.36px;transform:scaleY(1.18);">400 000</div>
<div class="t" style="right:295.00px;top:351.69px;font-size:5.15px;line-height:5.15px;color:#4a4a55;font-weight:400;transform-origin:0 4.36px;transform:scaleY(1.18);">600 000</div>
<div class="t" style="right:295.00px;top:321.49px;font-size:5.15px;line-height:5.15px;color:#4a4a55;font-weight:400;transform-origin:0 4.36px;transform:scaleY(1.18);">800 000</div>
<div class="t" style="right:295.00px;top:291.29px;font-size:5.15px;line-height:5.15px;color:#4a4a55;font-weight:400;transform-origin:0 4.36px;transform:scaleY(1.18);">1 000 000</div>
<div class="t" style="right:295.00px;top:261.09px;font-size:5.15px;line-height:5.15px;color:#4a4a55;font-weight:400;transform-origin:0 4.36px;transform:scaleY(1.18);">1 200 000</div>
<div class="t" style="left:814.50px;top:364.79px;font-size:5.33px;line-height:5.33px;color:#3c3c46;font-weight:400;transform-origin:0 4.51px;transform:scaleY(1.18);">Сумма</div>
<div class="t" style="left:552.20px;top:446.3px;width:0;height:0"><div class="t" style="right:0;top:0;font-size:5.33px;line-height:5.33px;color:#5a5a62;transform-origin:100% 0;transform:rotate(-90deg) translate(0,-50%) scaleY(1.2)">26 февр.</div></div>
<div class="t" style="left:562.90px;top:446.3px;width:0;height:0"><div class="t" style="right:0;top:0;font-size:5.33px;line-height:5.33px;color:#5a5a62;transform-origin:100% 0;transform:rotate(-90deg) translate(0,-50%) scaleY(1.2)">28 февр.</div></div>
<div class="t" style="left:573.60px;top:446.3px;width:0;height:0"><div class="t" style="right:0;top:0;font-size:5.33px;line-height:5.33px;color:#5a5a62;transform-origin:100% 0;transform:rotate(-90deg) translate(0,-50%) scaleY(1.2)">01 марта</div></div>
<div class="t" style="left:584.30px;top:446.3px;width:0;height:0"><div class="t" style="right:0;top:0;font-size:5.33px;line-height:5.33px;color:#5a5a62;transform-origin:100% 0;transform:rotate(-90deg) translate(0,-50%) scaleY(1.2)">03 марта</div></div>
<div class="t" style="left:595.00px;top:446.3px;width:0;height:0"><div class="t" style="right:0;top:0;font-size:5.33px;line-height:5.33px;color:#5a5a62;transform-origin:100% 0;transform:rotate(-90deg) translate(0,-50%) scaleY(1.2)">05 марта</div></div>
<div class="t" style="left:605.70px;top:446.3px;width:0;height:0"><div class="t" style="right:0;top:0;font-size:5.33px;line-height:5.33px;color:#5a5a62;transform-origin:100% 0;transform:rotate(-90deg) translate(0,-50%) scaleY(1.2)">07 марта</div></div>
<div class="t" style="left:616.40px;top:446.3px;width:0;height:0"><div class="t" style="right:0;top:0;font-size:5.33px;line-height:5.33px;color:#5a5a62;transform-origin:100% 0;transform:rotate(-90deg) translate(0,-50%) scaleY(1.2)">09 марта</div></div>
<div class="t" style="left:627.10px;top:446.3px;width:0;height:0"><div class="t" style="right:0;top:0;font-size:5.33px;line-height:5.33px;color:#5a5a62;transform-origin:100% 0;transform:rotate(-90deg) translate(0,-50%) scaleY(1.2)">11 марта</div></div>
<div class="t" style="left:637.80px;top:446.3px;width:0;height:0"><div class="t" style="right:0;top:0;font-size:5.33px;line-height:5.33px;color:#5a5a62;transform-origin:100% 0;transform:rotate(-90deg) translate(0,-50%) scaleY(1.2)">13 марта</div></div>
<div class="t" style="left:648.50px;top:446.3px;width:0;height:0"><div class="t" style="right:0;top:0;font-size:5.33px;line-height:5.33px;color:#5a5a62;transform-origin:100% 0;transform:rotate(-90deg) translate(0,-50%) scaleY(1.2)">15 марта</div></div>
<div class="t" style="left:659.20px;top:446.3px;width:0;height:0"><div class="t" style="right:0;top:0;font-size:5.33px;line-height:5.33px;color:#5a5a62;transform-origin:100% 0;transform:rotate(-90deg) translate(0,-50%) scaleY(1.2)">17 марта</div></div>
<div class="t" style="left:669.90px;top:446.3px;width:0;height:0"><div class="t" style="right:0;top:0;font-size:5.33px;line-height:5.33px;color:#5a5a62;transform-origin:100% 0;transform:rotate(-90deg) translate(0,-50%) scaleY(1.2)">19 марта</div></div>
<div class="t" style="left:680.60px;top:446.3px;width:0;height:0"><div class="t" style="right:0;top:0;font-size:5.33px;line-height:5.33px;color:#5a5a62;transform-origin:100% 0;transform:rotate(-90deg) translate(0,-50%) scaleY(1.2)">21 марта</div></div>
<div class="t" style="left:691.30px;top:446.3px;width:0;height:0"><div class="t" style="right:0;top:0;font-size:5.33px;line-height:5.33px;color:#5a5a62;transform-origin:100% 0;transform:rotate(-90deg) translate(0,-50%) scaleY(1.2)">23 марта</div></div>
<div class="t" style="left:702.00px;top:446.3px;width:0;height:0"><div class="t" style="right:0;top:0;font-size:5.33px;line-height:5.33px;color:#5a5a62;transform-origin:100% 0;transform:rotate(-90deg) translate(0,-50%) scaleY(1.2)">25 марта</div></div>
<div class="t" style="left:712.70px;top:446.3px;width:0;height:0"><div class="t" style="right:0;top:0;font-size:5.33px;line-height:5.33px;color:#5a5a62;transform-origin:100% 0;transform:rotate(-90deg) translate(0,-50%) scaleY(1.2)">27 марта</div></div>
<div class="t" style="left:723.40px;top:446.3px;width:0;height:0"><div class="t" style="right:0;top:0;font-size:5.33px;line-height:5.33px;color:#5a5a62;transform-origin:100% 0;transform:rotate(-90deg) translate(0,-50%) scaleY(1.2)">10 апр.</div></div>
<div class="t" style="left:734.10px;top:446.3px;width:0;height:0"><div class="t" style="right:0;top:0;font-size:5.33px;line-height:5.33px;color:#5a5a62;transform-origin:100% 0;transform:rotate(-90deg) translate(0,-50%) scaleY(1.2)">12 апр.</div></div>
<div class="t" style="left:744.80px;top:446.3px;width:0;height:0"><div class="t" style="right:0;top:0;font-size:5.33px;line-height:5.33px;color:#5a5a62;transform-origin:100% 0;transform:rotate(-90deg) translate(0,-50%) scaleY(1.2)">14 апр.</div></div>
<div class="t" style="left:755.50px;top:446.3px;width:0;height:0"><div class="t" style="right:0;top:0;font-size:5.33px;line-height:5.33px;color:#5a5a62;transform-origin:100% 0;transform:rotate(-90deg) translate(0,-50%) scaleY(1.2)">16 апр.</div></div>
<div class="t" style="left:766.20px;top:446.3px;width:0;height:0"><div class="t" style="right:0;top:0;font-size:5.33px;line-height:5.33px;color:#5a5a62;transform-origin:100% 0;transform:rotate(-90deg) translate(0,-50%) scaleY(1.2)">18 апр.</div></div>
<div class="t" style="left:776.90px;top:446.3px;width:0;height:0"><div class="t" style="right:0;top:0;font-size:5.33px;line-height:5.33px;color:#5a5a62;transform-origin:100% 0;transform:rotate(-90deg) translate(0,-50%) scaleY(1.2)">20 апр.</div></div>
<div class="t" style="left:787.60px;top:446.3px;width:0;height:0"><div class="t" style="right:0;top:0;font-size:5.33px;line-height:5.33px;color:#5a5a62;transform-origin:100% 0;transform:rotate(-90deg) translate(0,-50%) scaleY(1.2)">22 апр.</div></div>
<div class="t" style="left:798.30px;top:446.3px;width:0;height:0"><div class="t" style="right:0;top:0;font-size:5.33px;line-height:5.33px;color:#5a5a62;transform-origin:100% 0;transform:rotate(-90deg) translate(0,-50%) scaleY(1.2)">24 апр.</div></div>
<svg style="left:0;top:0" width="845" height="480"><path d="M131.5 36.6 A2.5 2.5 0 1 0 131.8 39.4" fill="none" stroke="#35b040" stroke-width="1.05"/><path d="M130.4 35.5 L132.7 35.3 L132.4 37.6 Z" fill="#35b040"/><circle cx="144.9" cy="36.6" r="2" fill="none" stroke="#3a7fc0" stroke-width="1.1"/><path d="M146.3 38 L148.6 40.6" stroke="#3a7fc0" stroke-width="1.3"/><path d="M141 38.9 L143.3 41.2 M143.3 38.9 L141 41.2" stroke="#e02020" stroke-width="1.2"/><g fill="none" stroke="#aeb4ba" stroke-width="0.8"><path d="M161.5 36 Q164.5 34 167.5 35.5"/><circle cx="165" cy="38.3" r="1.5"/><path d="M166.1 39.4 L167.6 40.9"/><path d="M161.5 37.2 L162.8 37.2"/></g><rect x="177.5" y="35.2" width="4.6" height="5.6" fill="#c9cfcc"/><g fill="none" stroke="#a9afb0" stroke-width="0.8"><circle cx="182" cy="39.3" r="1.4"/><path d="M183 40.3 L184.4 41.6"/></g><g fill="none" stroke="#aeb4ba" stroke-width="0.8"><path d="M193.5 35.6 Q196.5 34 199.5 35.5"/><circle cx="196.5" cy="38.4" r="1.5"/><path d="M197.6 39.5 L199 40.9"/></g><rect x="213" y="35.6" width="4.6" height="6" fill="#5a95d8"/><rect x="213.7" y="38.5" width="3" height="0.6" fill="#cfe0f5"/><rect x="213.7" y="39.8" width="3" height="0.6" fill="#cfe0f5"/><path d="M215 35 L220.3 35 L218.3 37.6 L218.3 40.3 L217.1 41.1 L217.1 37.6 Z" fill="#3a6fb0"/><path d="M243.6 37.6 L246.2 37.6 L244.9 39.2 Z" fill="#666"/><circle cx="259.6" cy="37.2" r="2.4" fill="#a8a8a8"/><rect x="260.5" y="35" width="4.6" height="6" fill="#4a90d0"/><rect x="276.5" y="35" width="1.2" height="4" fill="#2db34a"/><rect x="275" y="36.5" width="4.2" height="1.1" fill="#2db34a"/><rect x="275.3" y="38.8" width="1.1" height="3" fill="#3a80d0"/><rect x="277.1" y="37.8" width="1.1" height="4" fill="#e8b020"/><rect x="278.9" y="36.8" width="1.1" height="5" fill="#d83030"/><path d="M290.5 35 L294.6 35 L296 36.4 L296 41.6 L290.5 41.6 Z" fill="#fff" stroke="#9a9a9a" stroke-width="0.6"/><circle cx="291.8" cy="40" r="1.8" fill="#d82828"/><rect x="305.6" y="35.2" width="6.2" height="6" fill="#d6dbe3" stroke="#5a8ed0" stroke-width="0.7"/><rect x="305.6" y="35.2" width="6.2" height="1" fill="#4a88d8"/><path d="M306.9 37.3 L310.5 40.5 M310.5 37.3 L306.9 40.5" stroke="#9a9a9a" stroke-width="0.6"/><rect x="321.6" y="34.9" width="6" height="6.2" fill="#4f7fbf"/><rect x="322.6" y="35.3" width="3.6" height="1.8" fill="#cfe0f5"/><rect x="324.5" y="38" width="4" height="3.8" fill="#e8e8e8" stroke="#777" stroke-width="0.6"/><path d="M833.3 37.4 L835.7 37.4 L834.5 38.8 Z" fill="#555"/></svg>
</body></html>
